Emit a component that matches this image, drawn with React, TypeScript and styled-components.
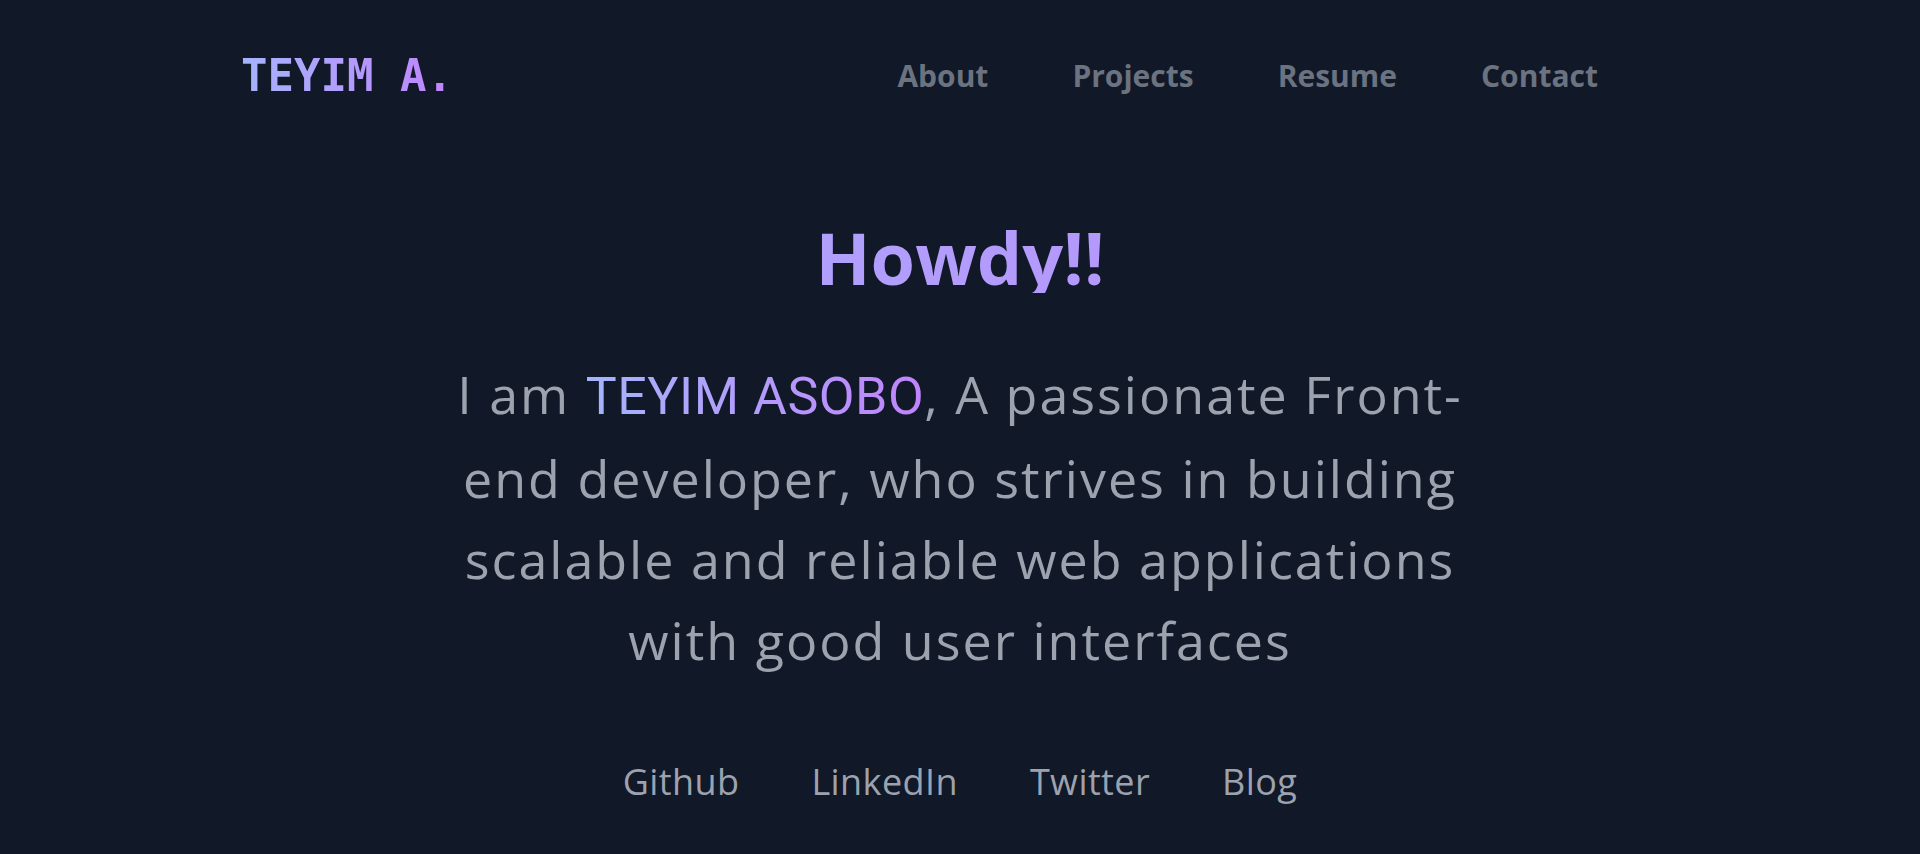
import React from "react";
import styled, { createGlobalStyle } from "styled-components";

const Global = createGlobalStyle`
  html, body { margin: 0; padding: 0; background: #111827; }
  body { font-family: "Open Sans", "Noto Sans", sans-serif; }
  * { box-sizing: border-box; }
`;

const Page = styled.div`
  min-height: 854px;
  background: #111827;
  display: flex;
  flex-direction: column;
`;

const Header = styled.header`
  height: 152px;
  display: flex;
  align-items: center;
  justify-content: space-between;
  padding: 0 322px 0 241px;
`;

const Logo = styled.a`
  font-family: "DejaVu Sans Mono", "Liberation Mono", monospace;
  font-weight: 700;
  font-size: 44px;
  line-height: 1;
  text-decoration: none;
  background: linear-gradient(90deg, #a5b4fc, #c084fc);
  -webkit-background-clip: text;
  background-clip: text;
  color: transparent;
`;

const Nav = styled.nav`
  display: flex;
  align-items: center;
  gap: 84px;
`;

const NavLink = styled.a`
  font-family: "Open Sans", sans-serif;
  font-weight: 700;
  font-size: 30px;
  line-height: 1;
  color: #6b7280;
  text-decoration: none;
`;

const Main = styled.main`
  display: flex;
  flex-direction: column;
  align-items: center;
  padding-top: 69px;
`;

const Title = styled.h1`
  margin: 0;
  width: 100%;
  text-align: center;
  font-family: "Open Sans", sans-serif;
  font-weight: 700;
  font-size: 72px;
  line-height: 72px;
  background: linear-gradient(90deg, #a5b4fc, #c084fc);
  -webkit-background-clip: text;
  background-clip: text;
  color: transparent;
`;

const Intro = styled.p`
  margin: 60px 0 0;
  max-width: 1064px;
  text-align: center;
  font-family: "Open Sans", sans-serif;
  font-size: 52px;
  line-height: 81px;
  letter-spacing: 2px;
  color: #9ca3af;
`;

const Name = styled.span`
  font-family: Roboto, "Liberation Sans", sans-serif;
  letter-spacing: 0.5px;
  background: linear-gradient(90deg, #a5b4fc, #c084fc);
  -webkit-background-clip: text;
  background-clip: text;
  color: transparent;
`;

const Socials = styled.div`
  margin-top: 78px;
  display: flex;
  gap: 72px;
`;

const SocialLink = styled.a`
  font-family: "Open Sans", sans-serif;
  font-size: 36px;
  line-height: 48px;
  letter-spacing: 0.4px;
  color: #9ca3af;
  text-decoration: none;
`;

export default function App() {
  return (
    <Page>
      <Global />
      <Header>
        <Logo href="#">TEYIM A.</Logo>
        <Nav>
          <NavLink href="#">About</NavLink>
          <NavLink href="#">Projects</NavLink>
          <NavLink href="#">Resume</NavLink>
          <NavLink href="#">Contact</NavLink>
        </Nav>
      </Header>
      <Main>
        <Title>Howdy!!</Title>
        <Intro>
          I am <Name>TEYIM ASOBO</Name>, A passionate Front-end developer, who strives in building
          scalable and reliable web applications with good user interfaces
        </Intro>
        <Socials>
          <SocialLink href="#">Github</SocialLink>
          <SocialLink href="#">LinkedIn</SocialLink>
          <SocialLink href="#">Twitter</SocialLink>
          <SocialLink href="#">Blog</SocialLink>
        </Socials>
      </Main>
    </Page>
  );
}
